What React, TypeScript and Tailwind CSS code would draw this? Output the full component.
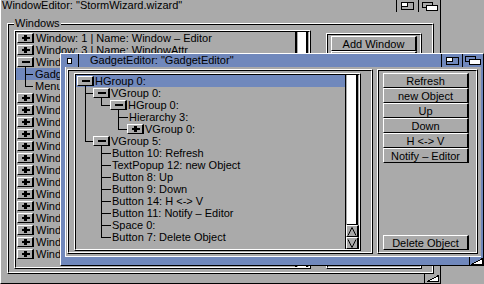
import React from "react";

type Row = { pl: string; box?: "open" | "closed"; text: string; sel?: boolean };

const windowRows: Row[] = [
  { pl: "pl-[1px]", box: "closed", text: "Window: 1 | Name: Window – Editor" },
  { pl: "pl-[1px]", box: "closed", text: "Window: 3 | Name: WindowAttr" },
  { pl: "pl-[1px]", box: "open", text: "Window: 2" },
  { pl: "pl-[19px]", text: "GadgetEditor", sel: true },
  { pl: "pl-[19px]", text: "Menu" },
  ...Array.from({ length: 14 }, (_, i) => ({ pl: "pl-[1px]", box: "closed" as const, text: `Window: ${i + 4}` })),
];

const gadgetRows: Row[] = [
  { pl: "pl-[1px]", box: "open", text: "HGroup 0:", sel: true },
  { pl: "pl-[17px]", box: "open", text: "VGroup 0:" },
  { pl: "pl-[34px]", box: "open", text: "HGroup 0:" },
  { pl: "pl-[53px]", text: "Hierarchy 3:" },
  { pl: "pl-[51px]", box: "closed", text: "VGroup 0:" },
  { pl: "pl-[17px]", box: "open", text: "VGroup 5:" },
  { pl: "pl-[36px]", text: "Button 10: Refresh" },
  { pl: "pl-[36px]", text: "TextPopup 12: new Object" },
  { pl: "pl-[36px]", text: "Button 8: Up" },
  { pl: "pl-[36px]", text: "Button 9: Down" },
  { pl: "pl-[36px]", text: "Button 14: H <-> V" },
  { pl: "pl-[36px]", text: "Button 11: Notify – Editor" },
  { pl: "pl-[36px]", text: "Space 0:" },
  { pl: "pl-[36px]", text: "Button 7: Delete Object" },
];

// tree connector lines, [x, y, w, h] relative to the list's rows
const windowLines = [
  [9, 35, 1, 20],
  [9, 42, 8, 1],
  [9, 54, 8, 1],
];

const gadgetLines = [
  [9, 11, 1, 56],
  [9, 18, 8, 1],
  [9, 66, 8, 1],
  [25, 23, 1, 8],
  [25, 30, 9, 1],
  [42, 35, 1, 20],
  [42, 42, 10, 1],
  [42, 54, 9, 1],
  [25, 71, 1, 92],
  ...Array.from({ length: 8 }, (_, k) => [25, 78 + 12 * k, 10, 1]),
];

function Ridge({ className = "", inner = "", children }: { className?: string; inner?: string; children?: React.ReactNode }) {
  return (
    <div className={`border border-t-white border-l-white border-r-black border-b-black ${className}`}>
      <div className={`h-full border border-t-black border-l-black border-r-white border-b-white ${inner}`}>{children}</div>
    </div>
  );
}

function Expander({ open, gap }: { open: boolean; gap: string }) {
  return (
    <span className={`relative shrink-0 w-[17px] h-[10px] bg-[#aaaaaa] border-t border-l border-t-white border-l-white border-b border-b-black border-r-2 border-r-black ${gap}`}>
      <span className="absolute left-[4px] top-[3px] w-[8px] h-[2px] bg-black" />
      {!open && <span className="absolute left-[6px] top-[1px] w-[3px] h-[6px] bg-black" />}
    </span>
  );
}

function TreeList({ rows, lines, gap }: { rows: Row[]; lines: number[][]; gap: string }) {
  return (
    <div className="relative flex-1 overflow-hidden">
      {rows.map((r, i) => (
        <div key={i} className={`h-[12px] flex items-center whitespace-nowrap ${r.pl} ${r.sel ? "bg-[#7088bc]" : ""}`}>
          {r.box && <Expander open={r.box === "open"} gap={gap} />}
          <span>{r.text}</span>
        </div>
      ))}
      <svg className="absolute left-0 top-0" width="300" height="260">
        {lines.map(([x, y, w, h], i) => (
          <rect key={i} x={x} y={y} width={w} height={h} fill="black" />
        ))}
      </svg>
    </div>
  );
}

function ZoomIcon() {
  return (
    <svg width="13" height="8" viewBox="0 0 13 8" shapeRendering="crispEdges">
      <rect x="0.5" y="0.5" width="12" height="7" fill="none" stroke="black" />
      <rect x="1" y="1" width="5" height="3" fill="white" />
      <rect x="6" y="1" width="1" height="4" fill="black" />
      <rect x="1" y="4" width="6" height="1" fill="black" />
    </svg>
  );
}

function DepthIcon() {
  return (
    <svg width="16" height="9" viewBox="0 0 16 9" shapeRendering="crispEdges">
      <rect x="0.5" y="0.5" width="10" height="5" fill="none" stroke="black" />
      <rect x="4.5" y="3.5" width="11" height="5" fill="white" stroke="black" />
    </svg>
  );
}

function Gadgets({ w }: { w: string }) {
  return (
    <div className="flex h-full">
      <div className={`${w} border-l border-black flex items-center justify-center`}>
        <ZoomIcon />
      </div>
      <div className={`${w} border-l border-black flex items-center justify-center`}>
        <DepthIcon />
      </div>
    </div>
  );
}

function SizeIcon() {
  return (
    <svg width="12" height="7" viewBox="0 0 12 7" shapeRendering="crispEdges">
      <polygon points="0.5,6.5 11.5,0.5 11.5,6.5" fill="white" stroke="black" />
    </svg>
  );
}

function Button({ label, h = "h-[15px]" }: { label: string; h?: string }) {
  return (
    <div className={`${h} w-[86px] shrink-0 flex items-center justify-center border-t border-l border-t-white border-l-white border-b border-b-black border-r-2 border-r-black`}>
      {label}
    </div>
  );
}

function ScrollArrow({ up }: { up: boolean }) {
  return (
    <div className="h-[12px] flex items-center justify-center border-t border-l border-t-white border-l-white border-b border-b-black border-r-2 border-r-black">
      <svg width="10" height="9" viewBox="0 0 10 9">
        <polyline
          points={up ? "1,8.5 5,0.5 9,8.5" : "1,0.5 5,8.5 9,0.5"}
          fill="none"
          stroke="black"
          strokeWidth="1"
        />
      </svg>
    </div>
  );
}

function WindowEditor() {
  return (
    <div className="absolute left-0 top-0 w-[441px] h-[284px] flex flex-col bg-[#aaaaaa] border-l border-l-white border-r border-r-black border-b border-b-black">
      <div className="h-[12px] flex">
        <div className="flex-1 pl-[1px] leading-[11px] whitespace-nowrap">WindowEditor: "StormWizard.wizard"</div>
        <Gadgets w="w-[22px]" />
      </div>
      <div className="relative flex-1 flex px-[6px] pt-[11px] pb-[9px]">
        <div className="relative flex-1 flex">
          <Ridge className="flex-1" inner="flex pl-[5px] pt-[5px] pb-[3px]">
            <Ridge className="w-[297px]" inner="flex">
              <TreeList rows={windowRows} lines={windowLines} gap="mr-[2px]" />
              <div className="w-[14px] flex border-l-2 border-black pl-[1px]">
                <div className="w-[10px] bg-white border-r-2 border-black" />
              </div>
            </Ridge>
            <Ridge className="w-[96px] ml-[15px] mt-[3px]" inner="flex flex-col pl-[3px] pt-[1px]">
              <Button label="Add Window" />
              <Button label="" />
              <Button label="" />
            </Ridge>
          </Ridge>
          <div className="absolute left-[7px] top-[-6px] px-[1px] bg-[#aaaaaa] leading-[12px]">Windows</div>
        </div>
        <div className="absolute right-0 bottom-0 w-[16px] h-[9px] border-l border-black flex items-center justify-center">
          <SizeIcon />
        </div>
      </div>
    </div>
  );
}

function GadgetEditor() {
  return (
    <div className="absolute left-[60px] top-[53px] w-[424px] h-[213px] flex flex-col bg-[#7088bc] border-l border-t border-l-white border-t-white border-r border-b border-r-black border-b-black">
      <div className="h-[13px] flex">
        <div className="w-[18px] border-r border-black flex items-center justify-center">
          <div className="w-[5px] h-[6px] bg-white border border-black" />
        </div>
        <div className="flex-1 pl-[11px] leading-[12px] whitespace-nowrap">GadgetEditor: "GadgetEditor"</div>
        <Gadgets w="w-[21px]" />
      </div>
      <div className="relative flex-1 flex pl-[4px] pr-[2px] pb-[8px]">
        <div className="flex-1 flex gap-[4px] bg-[#aaaaaa] border-l border-b border-white pl-[1px] pt-[2px] pb-[2px] pr-[3px]">
          <Ridge className="w-[306px]" inner="flex pl-[5px] pt-[2px] pb-[1px]">
            <Ridge className="w-[287px]" inner="flex">
              <TreeList rows={gadgetRows} lines={gadgetLines} gap="mr-[1px]" />
              <div className="w-[14px] flex flex-col border-l border-black">
                <div className="flex-1 pl-[1px] flex">
                  <div className="w-[11px] bg-white border-r-2 border-b border-black" />
                </div>
                <ScrollArrow up />
                <ScrollArrow up={false} />
              </div>
            </Ridge>
          </Ridge>
          <Ridge className="w-[101px]" inner="flex flex-col justify-between pl-[4px] pt-[2px] pb-[2px]">
            <div className="flex flex-col">
              <Button label="Refresh" />
              <Button label="new Object" />
              <Button label="Up" />
              <Button label="Down" />
              <Button label="H <-> V" />
              <Button label="Notify – Editor" />
            </div>
            <Button label="Delete Object" />
          </Ridge>
        </div>
        <div className="absolute right-0 bottom-0 w-[14px] h-[8px] border-l border-black flex items-center justify-center">
          <SizeIcon />
        </div>
      </div>
    </div>
  );
}

export default function App() {
  return (
    <div className="relative w-[484px] h-[284px] overflow-hidden bg-[#aaaaaa] text-black text-[11px] leading-[12px] font-['Liberation_Sans',Arial,sans-serif]">
      <WindowEditor />
      <GadgetEditor />
    </div>
  );
}
